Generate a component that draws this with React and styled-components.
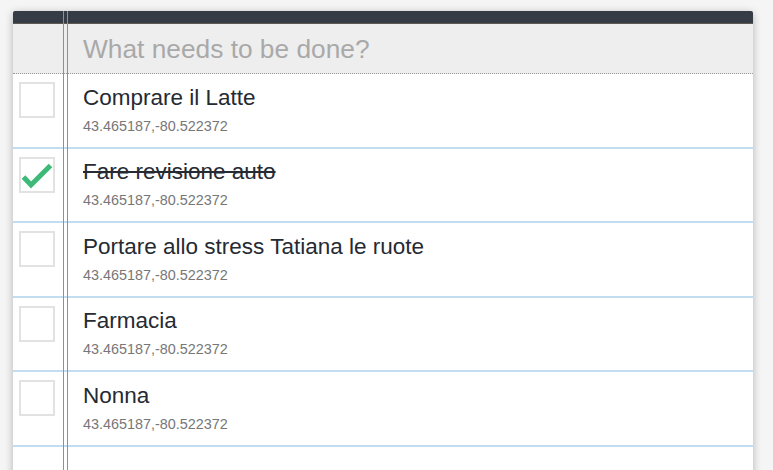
import React from "react";
import styled, { createGlobalStyle } from "styled-components";

const Global = createGlobalStyle`
  html, body { margin: 0; padding: 0; background: #f5f5f5; overflow: hidden; }
  body { font-family: "Liberation Sans", Arial, sans-serif; }
`;

const Page = styled.div`
  padding: 11px 20px 0 13px;
`;

const Panel = styled.section`
  position: relative;
  background: #fff;
  border-top: 12px solid #353c46;
  border-radius: 2px 2px 0 0;
  box-shadow: 0 2px 8px rgba(0, 0, 0, 0.28);
  min-height: 480px;

  &::before {
    content: "";
    position: absolute;
    top: -12px;
    bottom: 0;
    left: 50px;
    width: 3px;
    border-left: 1px solid #ee6a6a;
    border-right: 1px solid #ee6a6a;
    z-index: 2;
    pointer-events: none;
  }
`;

const Header = styled.header`
  height: 49px;
  background: #eeeeee;
  border-top: 1px solid #5e5852;
  border-bottom: 1px dotted #9a9a9a;
  display: flex;
  align-items: center;
  padding-left: 70px;
`;

const NewTodo = styled.input`
  flex: 1;
  border: none;
  outline: none;
  background: transparent;
  font-family: "Liberation Sans", Arial, sans-serif;
  font-size: 26.3px;
  color: #333;
  padding: 0;
  margin-top: 2px;
  &::placeholder { color: #a9a9a9; }
`;

const List = styled.ul`
  list-style: none;
  margin: 0;
  padding: 0;
`;

const Row = styled.li`
  height: 74.5px;
  box-sizing: border-box;
  border-bottom: 2px solid #c2dcf0;
  display: grid;
  grid-template-columns: 70px 1fr;
`;

const CheckCell = styled.div`
  padding: 8px 0 0 6px;
`;

const Box = styled.div`
  width: 36px;
  height: 36px;
  box-sizing: border-box;
  border: 2px solid #e2e2e2;
  position: relative;
  svg { position: absolute; left: -2px; top: -2px; }
`;

const Body = styled.div`
  padding-top: 10.5px;
  display: flex;
  flex-direction: column;
  align-items: flex-start;
`;

const Title = styled.span`
  font-size: 22.5px;
  color: #252a33;
  text-decoration: ${(p) => (p.$done ? "line-through" : "none")};
`;

const Coords = styled.span`
  font-size: 14.4px;
  color: #777;
  margin-top: 7px;
`;

const todos = [
  { title: "Comprare il Latte", done: false },
  { title: "Fare revisione auto", done: true },
  { title: "Portare allo stress Tatiana le ruote", done: false },
  { title: "Farmacia", done: false },
  { title: "Nonna", done: false },
];

function Check() {
  return (
    <svg width="36" height="36" viewBox="0 0 36 36">
      <path d="M4.5 20 L12 28 L31.5 8.5" fill="none" stroke="#3dba78" strokeWidth="5" strokeLinejoin="miter" />
    </svg>
  );
}

export default function App() {
  return (
    <Page>
      <Global />
      <Panel>
        <Header>
          <NewTodo placeholder="What needs to be done?" />
        </Header>
        <List>
          {todos.map((t) => (
            <Row key={t.title}>
              <CheckCell>
                <Box>{t.done && <Check />}</Box>
              </CheckCell>
              <Body>
                <Title $done={t.done}>{t.title}</Title>
                <Coords>43.465187,-80.522372</Coords>
              </Body>
            </Row>
          ))}
        </List>
      </Panel>
    </Page>
  );
}
